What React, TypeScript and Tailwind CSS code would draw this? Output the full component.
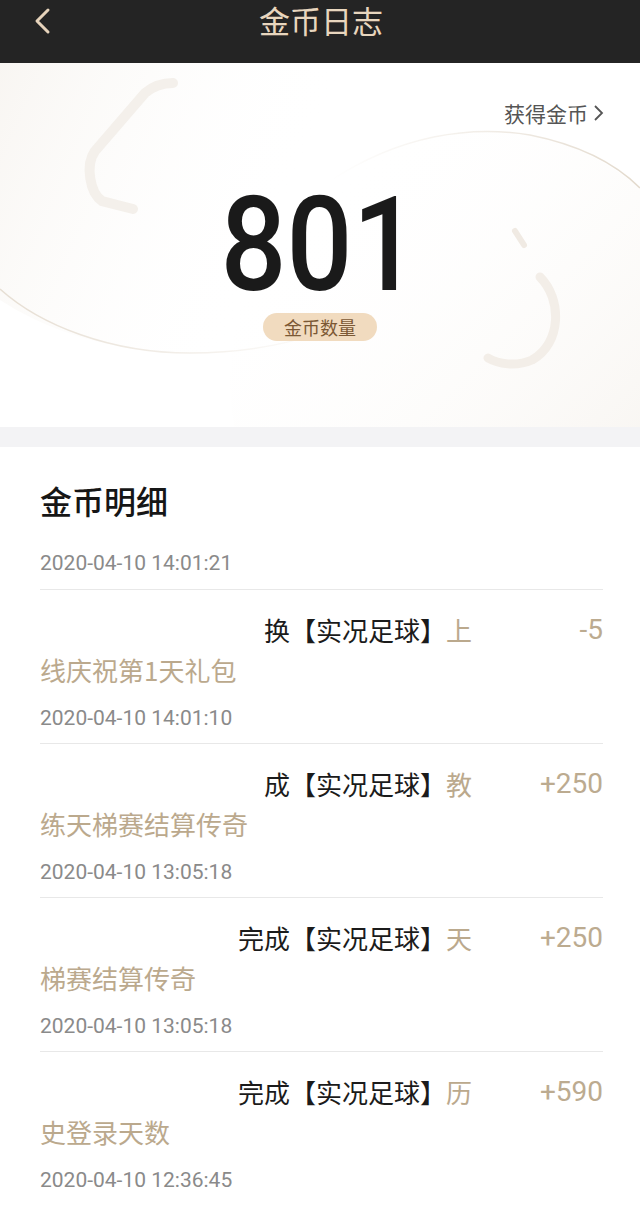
const records = [
  {
    pad: "w-[224px]",
    black: "换【实况足球】",
    gold: "上",
    rest: "线庆祝第1天礼包",
    points: "-5",
    time: "2020-04-10 14:01:10",
  },
  {
    pad: "w-[224px]",
    black: "成【实况足球】",
    gold: "教",
    rest: "练天梯赛结算传奇",
    points: "+250",
    time: "2020-04-10 13:05:18",
  },
  {
    pad: "w-[198px]",
    black: "完成【实况足球】",
    gold: "天",
    rest: "梯赛结算传奇",
    points: "+250",
    time: "2020-04-10 13:05:18",
  },
  {
    pad: "w-[198px]",
    black: "完成【实况足球】",
    gold: "历",
    rest: "史登录天数",
    points: "+590",
    time: "2020-04-10 12:36:45",
  },
];

function HeroDecor() {
  return (
    <svg
      className="absolute inset-0 h-full w-full"
      viewBox="0 0 640 364"
      preserveAspectRatio="none"
    >
      <defs>
        <linearGradient id="lg" x1="0" y1="0" x2="1" y2="0.3">
          <stop offset="0" stopColor="#f2ede6" />
          <stop offset="0.8" stopColor="#ffffff" stopOpacity="0" />
        </linearGradient>
        <linearGradient id="rg" x1="0" y1="0" x2="1" y2="1">
          <stop offset="0.15" stopColor="#ffffff" stopOpacity="0" />
          <stop offset="1" stopColor="#f1ebe3" />
        </linearGradient>
        <linearGradient id="ls" x1="0" y1="0" x2="1" y2="0">
          <stop offset="0" stopColor="#e6ded3" />
          <stop offset="1" stopColor="#e6ded3" stopOpacity="0" />
        </linearGradient>
        <linearGradient id="rs" x1="0" y1="0" x2="1" y2="0">
          <stop offset="0" stopColor="#e6ded3" stopOpacity="0" />
          <stop offset="1" stopColor="#e2d9cc" />
        </linearGradient>
      </defs>
      <ellipse cx="190" cy="90" rx="280" ry="200" fill="url(#lg)" />
      <path
        d="M0 226 C40 262 110 290 190 290 C260 290 320 275 360 250"
        fill="none"
        stroke="url(#ls)"
        strokeWidth="1.5"
      />
      <circle cx="480" cy="317" r="250" fill="url(#rg)" />
      <path
        d="M330 118 C400 72 470 62 530 72 C580 82 615 100 640 125"
        fill="none"
        stroke="url(#rs)"
        strokeWidth="1.5"
      />
      <path
        d="M173 20 C160 20 152 24 145 30 L95 88 C85 102 90 130 102 138 L133 146"
        fill="none"
        stroke="#f4f0eb"
        strokeWidth="10"
        strokeLinecap="round"
      />
      <path
        d="M540 214 C562 236 562 280 532 297 C516 304 498 301 488 295"
        fill="none"
        stroke="#f3eee8"
        strokeWidth="9"
        strokeLinecap="round"
      />
      <path
        d="M515 168 L524 182"
        fill="none"
        stroke="#f0eae3"
        strokeWidth="6"
        strokeLinecap="round"
      />
    </svg>
  );
}

export default function App() {
  return (
    <div className="w-[640px] min-h-[1205px] bg-white font-['Noto_Sans_CJK_SC',sans-serif]">
      <div className="relative h-[63px] bg-[#242424]">
        <svg
          className="absolute left-[33px] top-[7px]"
          width="20"
          height="28"
          viewBox="0 0 20 28"
        >
          <polyline
            points="15,3 4,14 15,25"
            fill="none"
            stroke="#e6d3bb"
            strokeWidth="3"
            strokeLinecap="round"
            strokeLinejoin="round"
          />
        </svg>
        <div className="pl-[2px] text-center text-[31px] leading-[40px] text-[#e8d6be]">
          金币日志
        </div>
      </div>

      <div className="relative h-[364px] overflow-hidden bg-white">
        <HeroDecor />
        <div className="relative flex flex-col items-center">
          <div className="flex w-full justify-end pr-[36px] pt-[36px]">
            <span className="flex items-center gap-1 text-[21px] leading-[28px] text-[#555555]">
              获得金币
              <svg width="12" height="20" viewBox="0 0 12 20">
                <polyline
                  points="3,3 10,10 3,17"
                  fill="none"
                  stroke="#555555"
                  strokeWidth="1.8"
                />
              </svg>
            </span>
          </div>
          <div className="mt-[68px] scale-x-[0.88] font-['Roboto',sans-serif] text-[132px] font-medium leading-[100px] text-[#1a1a1a]">
            801
          </div>
          <div className="mt-[18px] rounded-full bg-[#f1dbbf] px-[21px] text-[18px] leading-[28px] text-[#7b5834]">
            金币数量
          </div>
        </div>
      </div>

      <div className="h-[20px] bg-[#f3f3f5]" />

      <div className="pl-10 pr-[37px]">
        <div className="pt-[33px] text-[32px] font-medium leading-[40px] text-[#161616]">
          金币明细
        </div>
        <div className="mt-[29px] pb-[12px] font-['Roboto',sans-serif] text-[21px] leading-[28px] text-[#8a8a8a]">
          2020-04-10 14:01:21
        </div>
        {records.map((r, i) => (
          <div key={i} className="border-t border-[#e8e8e8] pt-5 pb-[11px]">
            <div className="flex justify-between">
              <div className="w-[444px] text-[26px] leading-[40px]">
                <span className={"inline-block " + r.pad} />
                <span className="text-[#1b1b1b]">{r.black}</span>
                <span className="text-[#bba98d]">{r.gold}</span>
                <br />
                <span className="text-[#bba98d]">{r.rest}</span>
              </div>
              <div className="font-['Roboto',sans-serif] text-[28px] leading-[40px] text-[#bcab90]">
                {r.points}
              </div>
            </div>
            <div className="mt-[14px] font-['Roboto',sans-serif] text-[21px] leading-[28px] text-[#8a8a8a]">
              {r.time}
            </div>
          </div>
        ))}
      </div>
    </div>
  );
}
